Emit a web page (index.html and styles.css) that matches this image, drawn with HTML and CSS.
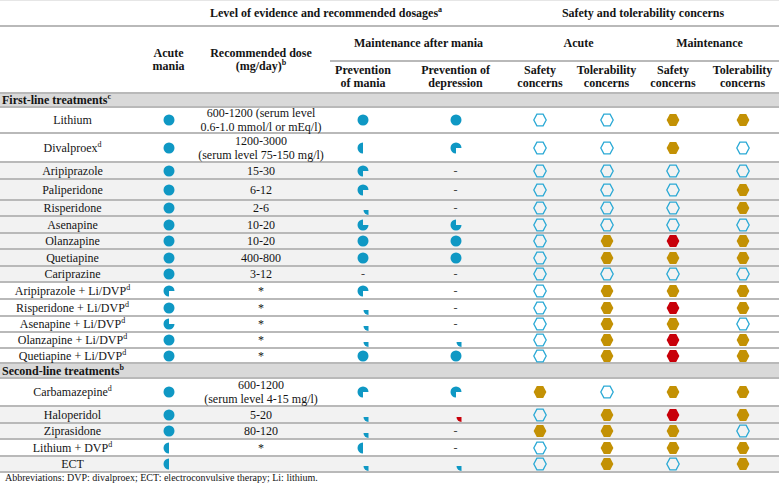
FILE: index.html
```html
<!DOCTYPE html>
<html>
<head>
<meta charset="utf-8">
<link rel="stylesheet" href="styles.css">
</head>
<body>
<svg class="defs" width="0" height="0">
  <defs>
    <symbol id="f" viewBox="0 0 14 14"><circle cx="7" cy="7" r="5.5" fill="#0f98c4"/></symbol>
    <symbol id="h" viewBox="0 0 14 14"><path d="M7 1.5 A5.5 5.5 0 0 0 7 12.5 Z" fill="#0f98c4"/></symbol>
    <symbol id="a" viewBox="0 0 14 14"><path d="M7 7 L7 12.5 A5.5 5.5 0 1 1 12.5 7 Z" fill="#0f98c4"/></symbol>
    <symbol id="b" viewBox="0 0 14 14"><path d="M7 7 L12.5 7 A5.5 5.5 0 1 1 7 1.5 Z" fill="#0f98c4"/></symbol>
    <symbol id="q" viewBox="0 0 14 14" overflow="visible"><path d="M12.5 9 L12.5 14 A5 5 0 0 1 7.5 9 Z" fill="#0f98c4"/></symbol>
    <symbol id="qr" viewBox="0 0 14 14" overflow="visible"><path d="M12.5 9 L12.5 14 A5 5 0 0 1 7.5 9 Z" fill="#c8000a"/></symbol>
    <symbol id="ho" viewBox="0 0 14 14"><polygon points="3.9,1.2 10.1,1.2 13.2,7 10.1,12.8 3.9,12.8 0.8,7" fill="none" stroke="#2aa9d5" stroke-width="1.3"/></symbol>
    <symbol id="hg" viewBox="0 0 14 14"><polygon points="3.8,1 10.2,1 13.4,7 10.2,13 3.8,13 0.6,7" fill="#c39104"/></symbol>
    <symbol id="hr" viewBox="0 0 14 14"><polygon points="3.8,1 10.2,1 13.4,7 10.2,13 3.8,13 0.6,7" fill="#c8000a"/></symbol>
  </defs>
</svg>
<table class="t">
  <colgroup>
    <col class="c1"><col class="c2"><col class="c3"><col class="c4"><col class="c5"><col class="c6"><col class="c7"><col class="c8"><col class="c9">
  </colgroup>
  <thead>
    <tr class="r26">
      <th></th>
      <th colspan="4">Level of evidence and recommended dosages<sup>a</sup></th>
      <th colspan="4">Safety and tolerability concerns</th>
    </tr>
    <tr class="r35">
      <th rowspan="2"></th>
      <th rowspan="2">Acute<br>mania</th>
      <th rowspan="2">Recommended dose<br>(mg/day)<sup>b</sup></th>
      <th colspan="2">Maintenance after mania</th>
      <th colspan="2" class="acute">Acute</th>
      <th colspan="2">Maintenance</th>
    </tr>
    <tr class="r32">
      <th>Prevention<br>of mania</th>
      <th class="pd">Prevention of<br>depression</th>
      <th>Safety<br>concerns</th>
      <th>Tolerability<br>concerns</th>
      <th>Safety<br>concerns</th>
      <th>Tolerability<br>concerns</th>
    </tr>
  </thead>
  <tbody>
    <tr class="r14"><td colspan="9" class="band">First-line treatments<sup>c</sup></td></tr>
    <tr class="r26">
      <td>Lithium</td>
      <td><svg class="ic"><use href="#f"/></svg></td>
      <td><div class="two">600-1200 (serum level<br>0.6-1.0 mmol/l or mEq/l)</div></td>
      <td><svg class="ic"><use href="#f"/></svg></td>
      <td class="pd"><svg class="ic"><use href="#f"/></svg></td>
      <td><svg class="ic"><use href="#ho"/></svg></td>
      <td><svg class="ic"><use href="#ho"/></svg></td>
      <td><svg class="ic"><use href="#hg"/></svg></td>
      <td><svg class="ic"><use href="#hg"/></svg></td>
    </tr>
    <tr class="r29">
      <td>Divalproex<sup>d</sup></td>
      <td><svg class="ic"><use href="#f"/></svg></td>
      <td><div class="two">1200-3000<br>(serum level 75-150 mg/l)</div></td>
      <td><svg class="ic"><use href="#h"/></svg></td>
      <td class="pd"><svg class="ic"><use href="#a"/></svg></td>
      <td><svg class="ic"><use href="#ho"/></svg></td>
      <td><svg class="ic"><use href="#ho"/></svg></td>
      <td><svg class="ic"><use href="#hg"/></svg></td>
      <td><svg class="ic"><use href="#ho"/></svg></td>
    </tr>
    <tr class="r17 g">
      <td>Aripiprazole</td>
      <td><svg class="ic"><use href="#f"/></svg></td>
      <td>15-30</td>
      <td><svg class="ic"><use href="#a"/></svg></td>
      <td class="pd dash">-</td>
      <td><svg class="ic"><use href="#ho"/></svg></td>
      <td><svg class="ic"><use href="#ho"/></svg></td>
      <td><svg class="ic"><use href="#ho"/></svg></td>
      <td><svg class="ic"><use href="#ho"/></svg></td>
    </tr>
    <tr class="r21 g">
      <td>Paliperidone</td>
      <td><svg class="ic"><use href="#f"/></svg></td>
      <td>6-12</td>
      <td><svg class="ic"><use href="#a"/></svg></td>
      <td class="pd dash">-</td>
      <td><svg class="ic"><use href="#ho"/></svg></td>
      <td><svg class="ic"><use href="#ho"/></svg></td>
      <td><svg class="ic"><use href="#ho"/></svg></td>
      <td><svg class="ic"><use href="#hg"/></svg></td>
    </tr>
    <tr class="r16 g">
      <td>Risperidone</td>
      <td><svg class="ic"><use href="#f"/></svg></td>
      <td>2-6</td>
      <td><svg class="ic"><use href="#q"/></svg></td>
      <td class="pd dash">-</td>
      <td><svg class="ic"><use href="#ho"/></svg></td>
      <td><svg class="ic"><use href="#ho"/></svg></td>
      <td><svg class="ic"><use href="#ho"/></svg></td>
      <td><svg class="ic"><use href="#hg"/></svg></td>
    </tr>
    <tr class="r17 g">
      <td>Asenapine</td>
      <td><svg class="ic"><use href="#f"/></svg></td>
      <td>10-20</td>
      <td><svg class="ic"><use href="#b"/></svg></td>
      <td class="pd"><svg class="ic"><use href="#b"/></svg></td>
      <td><svg class="ic"><use href="#ho"/></svg></td>
      <td><svg class="ic"><use href="#ho"/></svg></td>
      <td><svg class="ic"><use href="#ho"/></svg></td>
      <td><svg class="ic"><use href="#ho"/></svg></td>
    </tr>
    <tr class="r16 g">
      <td>Olanzapine</td>
      <td><svg class="ic"><use href="#f"/></svg></td>
      <td>10-20</td>
      <td><svg class="ic"><use href="#f"/></svg></td>
      <td class="pd"><svg class="ic"><use href="#f"/></svg></td>
      <td><svg class="ic"><use href="#ho"/></svg></td>
      <td><svg class="ic"><use href="#hg"/></svg></td>
      <td><svg class="ic"><use href="#hr"/></svg></td>
      <td><svg class="ic"><use href="#hg"/></svg></td>
    </tr>
    <tr class="r17 g">
      <td>Quetiapine</td>
      <td><svg class="ic"><use href="#f"/></svg></td>
      <td>400-800</td>
      <td><svg class="ic"><use href="#f"/></svg></td>
      <td class="pd"><svg class="ic"><use href="#f"/></svg></td>
      <td><svg class="ic"><use href="#ho"/></svg></td>
      <td><svg class="ic"><use href="#hg"/></svg></td>
      <td><svg class="ic"><use href="#hg"/></svg></td>
      <td><svg class="ic"><use href="#hg"/></svg></td>
    </tr>
    <tr class="r16 g">
      <td>Cariprazine</td>
      <td><svg class="ic"><use href="#f"/></svg></td>
      <td>3-12</td>
      <td class="dash">-</td>
      <td class="pd dash">-</td>
      <td><svg class="ic"><use href="#ho"/></svg></td>
      <td><svg class="ic"><use href="#ho"/></svg></td>
      <td><svg class="ic"><use href="#ho"/></svg></td>
      <td><svg class="ic"><use href="#ho"/></svg></td>
    </tr>
    <tr class="r17">
      <td>Aripiprazole + Li/DVP<sup>d</sup></td>
      <td><svg class="ic"><use href="#a"/></svg></td>
      <td>*</td>
      <td><svg class="ic"><use href="#a"/></svg></td>
      <td class="pd dash">-</td>
      <td><svg class="ic"><use href="#ho"/></svg></td>
      <td><svg class="ic"><use href="#hg"/></svg></td>
      <td><svg class="ic"><use href="#hg"/></svg></td>
      <td><svg class="ic"><use href="#hg"/></svg></td>
    </tr>
    <tr class="r17">
      <td>Risperidone + Li/DVP<sup>d</sup></td>
      <td><svg class="ic"><use href="#f"/></svg></td>
      <td>*</td>
      <td><svg class="ic"><use href="#q"/></svg></td>
      <td class="pd dash">-</td>
      <td><svg class="ic"><use href="#ho"/></svg></td>
      <td><svg class="ic"><use href="#hg"/></svg></td>
      <td><svg class="ic"><use href="#hr"/></svg></td>
      <td><svg class="ic"><use href="#hg"/></svg></td>
    </tr>
    <tr class="r16">
      <td>Asenapine + Li/DVP<sup>d</sup></td>
      <td><svg class="ic"><use href="#b"/></svg></td>
      <td>*</td>
      <td><svg class="ic"><use href="#q"/></svg></td>
      <td class="pd dash">-</td>
      <td><svg class="ic"><use href="#ho"/></svg></td>
      <td><svg class="ic"><use href="#hg"/></svg></td>
      <td><svg class="ic"><use href="#hg"/></svg></td>
      <td><svg class="ic"><use href="#ho"/></svg></td>
    </tr>
    <tr class="r16">
      <td>Olanzapine + Li/DVP<sup>d</sup></td>
      <td><svg class="ic"><use href="#f"/></svg></td>
      <td>*</td>
      <td><svg class="ic"><use href="#q"/></svg></td>
      <td class="pd"><svg class="ic"><use href="#q"/></svg></td>
      <td><svg class="ic"><use href="#ho"/></svg></td>
      <td><svg class="ic"><use href="#hg"/></svg></td>
      <td><svg class="ic"><use href="#hr"/></svg></td>
      <td><svg class="ic"><use href="#hg"/></svg></td>
    </tr>
    <tr class="r15">
      <td>Quetiapine + Li/DVP<sup>d</sup></td>
      <td><svg class="ic"><use href="#f"/></svg></td>
      <td>*</td>
      <td><svg class="ic"><use href="#f"/></svg></td>
      <td class="pd"><svg class="ic"><use href="#f"/></svg></td>
      <td><svg class="ic"><use href="#ho"/></svg></td>
      <td><svg class="ic"><use href="#hg"/></svg></td>
      <td><svg class="ic"><use href="#hr"/></svg></td>
      <td><svg class="ic"><use href="#hg"/></svg></td>
    </tr>
    <tr class="r15"><td colspan="9" class="band">Second-line treatments<sup>b</sup></td></tr>
    <tr class="r28">
      <td>Carbamazepine<sup>d</sup></td>
      <td><svg class="ic"><use href="#f"/></svg></td>
      <td><div class="two">600-1200<br>(serum level 4-15 mg/l)</div></td>
      <td><svg class="ic"><use href="#a"/></svg></td>
      <td class="pd"><svg class="ic"><use href="#a"/></svg></td>
      <td><svg class="ic"><use href="#hg"/></svg></td>
      <td><svg class="ic"><use href="#ho"/></svg></td>
      <td><svg class="ic"><use href="#hg"/></svg></td>
      <td><svg class="ic"><use href="#hg"/></svg></td>
    </tr>
    <tr class="r17 g">
      <td>Haloperidol</td>
      <td><svg class="ic"><use href="#f"/></svg></td>
      <td>5-20</td>
      <td><svg class="ic"><use href="#q"/></svg></td>
      <td class="pd"><svg class="ic"><use href="#qr"/></svg></td>
      <td><svg class="ic"><use href="#ho"/></svg></td>
      <td><svg class="ic"><use href="#hg"/></svg></td>
      <td><svg class="ic"><use href="#hr"/></svg></td>
      <td><svg class="ic"><use href="#hg"/></svg></td>
    </tr>
    <tr class="r16 g">
      <td>Ziprasidone</td>
      <td><svg class="ic"><use href="#f"/></svg></td>
      <td>80-120</td>
      <td><svg class="ic"><use href="#q"/></svg></td>
      <td class="pd dash">-</td>
      <td><svg class="ic"><use href="#hg"/></svg></td>
      <td><svg class="ic"><use href="#hg"/></svg></td>
      <td><svg class="ic"><use href="#hg"/></svg></td>
      <td><svg class="ic"><use href="#ho"/></svg></td>
    </tr>
    <tr class="r17">
      <td>Lithium + DVP<sup>d</sup></td>
      <td><svg class="ic"><use href="#h"/></svg></td>
      <td>*</td>
      <td><svg class="ic"><use href="#h"/></svg></td>
      <td class="pd dash">-</td>
      <td><svg class="ic"><use href="#ho"/></svg></td>
      <td><svg class="ic"><use href="#hg"/></svg></td>
      <td><svg class="ic"><use href="#hg"/></svg></td>
      <td><svg class="ic"><use href="#hg"/></svg></td>
    </tr>
    <tr class="r16 g">
      <td>ECT</td>
      <td><svg class="ic"><use href="#h"/></svg></td>
      <td></td>
      <td><svg class="ic"><use href="#q"/></svg></td>
      <td class="pd"><svg class="ic"><use href="#q"/></svg></td>
      <td><svg class="ic"><use href="#ho"/></svg></td>
      <td><svg class="ic"><use href="#hg"/></svg></td>
      <td><svg class="ic"><use href="#ho"/></svg></td>
      <td><svg class="ic"><use href="#hg"/></svg></td>
    </tr>
    <tr class="r12"><td colspan="9" class="abbr">Abbreviations: DVP: divalproex; ECT: electroconvulsive therapy; Li: lithium.</td></tr>
  </tbody>
</table>
</body>
</html>
```
FILE: styles.css
```css
html, body {
  margin: 0;
  padding: 0;
  background: #ffffff;
}
body {
  font-family: "Liberation Serif", "Times New Roman", serif;
  color: #141414;
  width: 779px;
  height: 484px;
  overflow: hidden;
}
.defs {
  display: block;
  width: 0;
  height: 0;
  overflow: hidden;
}
.t {
  width: 779px;
  border-collapse: separate;
  border-spacing: 0;
  table-layout: fixed;
  font-size: 12px;
  line-height: 12px;
  border-top: 1px solid #e6e6e6;
}
.c1 { width: 145px; }
.c2 { width: 47px; }
.c3 { width: 138px; }
.c4 { width: 66px; }
.c5 { width: 111px; }
.c6 { width: 66px; }
.c7 { width: 67px; }
.c8 { width: 66px; }
.c9 { width: 73px; }
th, td {
  padding: 0;
  text-align: center;
  vertical-align: middle;
  border-bottom: 2px solid #b9b9b9;
  white-space: nowrap;
}
th {
  font-weight: bold;
  line-height: 13px;
}
th.acute {
  padding-left: 10px;
}
.pd {
  padding-left: 8px;
}
sup {
  font-size: 8px;
  line-height: 0;
  vertical-align: 5px;
}
.g td {
  background: #f2f2f2;
}
.band {
  background: #d9d9d9;
  text-align: left;
  font-weight: bold;
  padding-left: 2px;
}
.abbr {
  border-bottom: none;
  text-align: left;
  font-size: 10px;
  line-height: 10px;
  padding-left: 5px;
  vertical-align: top;
}
.two {
  line-height: 14px;
  margin: -2px 0;
}
.dash {
  color: #444;
}
.ic {
  display: block;
  width: 14px;
  height: 14px;
  margin: -1px auto;
  overflow: visible;
}
.r12 { height: 12px; }
.r14 { height: 14px; }
.r15 { height: 15px; }
.r16 { height: 16px; }
.r17 { height: 17px; }
.r21 { height: 21px; }
.r26 { height: 26px; }
.r28 { height: 28px; }
.r29 { height: 29px; }
.r32 { height: 32px; }
.r35 { height: 35px; }
```
